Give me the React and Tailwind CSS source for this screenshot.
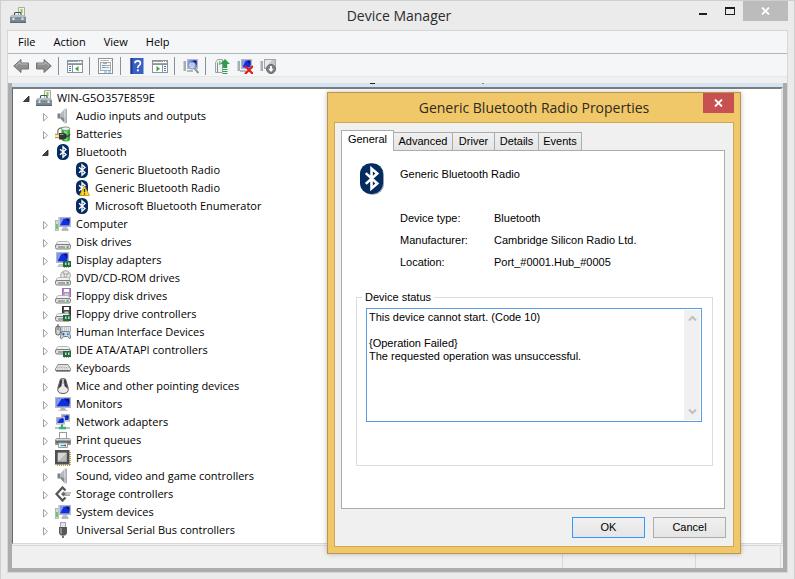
import React from "react";

const UI = "font-['Open_Sans','Noto_Sans',sans-serif]";
const DIALOG = "font-['Liberation_Sans',Arial,sans-serif]";

function Svg({ children, size = "size-4", box = "0 0 16 16" }) {
  return (
    <svg viewBox={box} className={`${size} shrink-0`} aria-hidden="true">
      {children}
    </svg>
  );
}

/* ---------- shared drawing parts ---------- */

function ScreenPart({ x = 4, y = 1, w = 12, h = 10 }) {
  return (
    <g>
      <rect x={x} y={y} width={w} height={h} fill="#d6d9dd" />
      <rect x={x + 0.5} y={y + 0.5} width={w - 1} height={h - 1} fill="none" stroke="#b4b9c0" />
      <rect x={x + 1.5} y={y + 1.5} width={w - 3} height={h - 3} fill="#1230d8" />
      <path d={`M${x + 1.5} ${y + h - 1.5}V${y + 1.5}h${(w - 3) * 0.4}z`} fill="#7f9cf5" />
      <path d={`M${x + w * 0.55} ${y + 1.5}h${w * 0.45 - 1.5}v${h * 0.5}z`} fill="#0512a0" />
    </g>
  );
}

function ChipPart() {
  return (
    <g>
      <rect x="8" y="9" width="8" height="6" fill="#1f6b45" />
      <rect x="10" y="10.500" width="1.500" height="2.500" fill="#b5dcc4" />
      <rect x="13" y="10.500" width="1.500" height="2.500" fill="#b5dcc4" />
      <path d="M9 15.500h6" stroke="#c9a54a" strokeDasharray="1 1" />
    </g>
  );
}

function DrivePart() {
  return (
    <g>
      <path d="M3.500 7.500h9q1 0 1.500 1l1.500 3H.5l1.500-3q.5-1 1.500-1z" fill="#f1f1f1" stroke="#a8a8a8" strokeWidth=".8" />
      <rect x=".5" y="10.500" width="15" height="4.500" rx="1.500" fill="#e2e2e2" stroke="#7d7d7d" />
      <path d="M3 13h7" stroke="#6a6a6a" />
      <rect x="11.600" y="11.700" width="2" height="2.300" fill="#42b649" />
    </g>
  );
}

function BluetoothPart() {
  return (
    <g>
      <rect x="2" y="0" width="12" height="16" rx="5.5" fill="#052c61" />
      <path d="M5 5.2l6 5.4-3 2.6V2.8l3 2.6-6 5.4" fill="none" stroke="#fff" strokeWidth="1.35" />
    </g>
  );
}

function PanePart({ children }) {
  return (
    <g>
      <rect x=".5" y="2.5" width="15" height="12" fill="#fff" stroke="#8a929a" />
      <path d="M1 3.5h14M1 5.5h14" stroke="#9aa4ae" />
      <path d="M11 3.5h1M13 3.5h1" stroke="#fff" />
      <path d="M0 6.5h16" stroke="#8a929a" />
      {children}
    </g>
  );
}

/* ---------- icons ---------- */

const icons = {
  manager: (
    <Svg>
      <path d="M8.500 .5h6V9h-6z" fill="#f1f2ec" stroke="#a9aaa2" />
      <path d="M10.500 2h2v4h-2z" fill="#86c94c" />
      <path d="M4.500 8V6.500q0-1 1-1H10q1 0 1 1V8" fill="none" stroke="#4c5358" strokeWidth="1.200" />
      <path d="M1.500 8h13L16 10.500V16H0v-5.500z" fill="#8796a0" />
      <path d="M1.800 8h12.400l1.300 2.500H.5z" fill="#b3bfc7" />
      <path d="M0 11h16" stroke="#6b7a84" />
      <path d="M0 14.500h16" stroke="#74838d" strokeWidth="2.500" />
      <path d="M2.500 10.500h2V13h-2zM11.500 10.500h2V13h-2z" fill="#dfe6ea" />
      <path d="M0 15.600h16" stroke="#505d66" strokeWidth=".8" />
    </Svg>
  ),
  speaker: (
    <Svg>
      <path d="M2.500 5.500h3v5h-3z" fill="#7b8086" />
      <path d="M5.500 5.500L9.500 1v14l-4-4.500z" fill="#b4b8bd" />
      <path d="M5.500 9L9.500 10v5l-4-4.500z" fill="#858a90" />
      <path d="M9.500 .5h2v15h-2z" fill="#c9ccd0" />
      <path d="M11.300 1v14" stroke="#8a8f94" strokeWidth=".8" />
    </Svg>
  ),
  battery: (
    <Svg>
      <path d="M6.500 3Q6.500 1 10.500 1T15 3v10q0 2.500-4.250 2.500T6.500 13z" fill="#2fa83a" />
      <path d="M9 4.500h3.500v10H10q-1 0-1-1z" fill="#6fe07a" />
      <ellipse cx="10.750" cy="2.700" rx="4.200" ry="1.800" fill="#eef2ec" stroke="#74806f" strokeWidth=".8" />
      <path d="M3 8Q1.500 2 7 1.800" fill="none" stroke="#5a5a5a" strokeWidth="1.100" />
      <path d="M4 7h4q4 .3 4 3.200T8 13.500H4z" fill="#373737" />
      <path d="M5 8.500h3.500" stroke="#9c9c9c" />
      <path d="M0 8.500h4M0 11.500h4" stroke="#c3a12c" strokeWidth="1.300" />
      <path d="M12 10.200q2 .3 3-2" fill="none" stroke="#444" strokeWidth="1.400" />
    </Svg>
  ),
  bluetooth: (
    <Svg>
      <BluetoothPart />
    </Svg>
  ),
  bluetoothWarning: (
    <Svg>
      <BluetoothPart />
      <path d="M10.500 6l5 9.500h-10z" fill="#fdd835" stroke="#c39a12" strokeWidth=".8" strokeLinejoin="round" />
      <path d="M10.500 9v3.200M10.500 13.300v1.200" stroke="#3a2c00" strokeWidth="1.300" />
    </Svg>
  ),
  computer: (
    <Svg>
      <rect x=".5" y="4.500" width="3" height="10" fill="#d5d8db" stroke="#a5aab0" strokeWidth=".8" />
      <rect x="1.200" y="8" width="1.600" height="5" fill="#4fc24a" />
      <ScreenPart x={3.500} y={1} w={12.500} h={10} />
      <path d="M8 11h4l1.500 3.500h-7z" fill="#bcc0c5" />
      <path d="M6.500 14h7" stroke="#9a9fa6" />
    </Svg>
  ),
  disk: (
    <Svg>
      <DrivePart />
    </Svg>
  ),
  display: (
    <Svg>
      <ScreenPart x={1} y={0} w={13} h={11} />
      <path d="M4 12h5v3H2z" fill="#c3c7cc" />
      <ChipPart />
    </Svg>
  ),
  dvd: (
    <Svg>
      <circle cx="10.500" cy="5.500" r="4.800" fill="#e9e9e9" stroke="#949494" strokeWidth=".9" />
      <path d="M10.500 5.500L7.500 2M10.500 5.500l3.500-3" stroke="#a9a9a9" strokeWidth="1.200" />
      <circle cx="10.500" cy="5.500" r="1.400" fill="#fff" stroke="#888" strokeWidth=".8" />
      <DrivePart />
    </Svg>
  ),
  floppy: (
    <Svg>
      <rect x="7.500" y=".5" width="8" height="8" fill="#b58bc9" stroke="#9a72b0" />
      <rect x="9" y="1" width="5" height="3" fill="#fff" />
      <rect x="9.500" y="5.500" width="4" height="3" fill="#e3d2ea" />
      <DrivePart />
    </Svg>
  ),
  floppyController: (
    <Svg>
      <rect x="7.500" y=".5" width="8" height="8" fill="#4c4c4c" stroke="#333" />
      <rect x="9" y="1" width="5" height="3" fill="#fff" />
      <rect x="9.500" y="5.500" width="4" height="3" fill="#ccc" />
      <DrivePart />
      <ChipPart />
    </Svg>
  ),
  hid: (
    <Svg>
      <rect x=".8" y="2" width="4.500" height="9" rx="2" fill="#d9d9d9" stroke="#555" />
      <path d="M3 0v6" stroke="#555" />
      <rect x="6" y="2.500" width="9.500" height="5" fill="#e8ebee" stroke="#8f979f" strokeWidth=".8" />
      <path d="M7 4h8M7 6h8" stroke="#9aa2aa" strokeDasharray="1 1" />
      <path d="M6.500 8q4-1.200 8 0l1.300 6q-1.300 2-3-1.500H8.500q-1.700 3.500-3.300 1.500z" fill="#cfdbe6" stroke="#5f7386" strokeWidth=".9" />
      <path d="M7.200 10.200h2.500M8.400 9v2.500" stroke="#31485e" strokeWidth=".9" />
      <circle cx="12.800" cy="10.200" r="1" fill="#2e86d8" />
    </Svg>
  ),
  ide: (
    <Svg>
      <path d="M3.500 4.500h9q1 0 1.500 1l1.500 3H.5l1.500-3q.5-1 1.500-1z" fill="#f1f1f1" stroke="#a8a8a8" strokeWidth=".8" />
      <rect x=".5" y="7.500" width="15" height="4.500" rx="1.500" fill="#e2e2e2" stroke="#7d7d7d" />
      <path d="M3 10h5" stroke="#6a6a6a" />
      <ChipPart />
    </Svg>
  ),
  keyboard: (
    <Svg>
      <path d="M3 4.500h10l2.500 4.500v1q0 1-1 1h-13q-1 0-1-1V9z" fill="#f4f4f4" stroke="#7c7c7c" strokeWidth=".9" />
      <path d="M3.500 6h9M2.500 7.500h11M2 9h12" stroke="#a0a0a0" strokeDasharray="1 .7" />
      <path d="M1 10.800h14" stroke="#555" strokeWidth="1.200" />
    </Svg>
  ),
  mouse: (
    <Svg>
      <path d="M5.500 1Q8 .2 10.500 1l2.800 9.500q.5 5-5.300 5t-5.300-5z" fill="#e9e9e9" stroke="#5c5c5c" />
      <path d="M5.500 1.500h1.700L6.500 8l-3.500 3zM8.800 1.500h1.700L13 11 9.500 8z" fill="#3c3c3c" />
      <path d="M8 1v5" stroke="#999" />
    </Svg>
  ),
  monitor: (
    <Svg>
      <ScreenPart x={0} y={1} w={16} h={11} />
      <path d="M6 12h4l1.500 3h-7z" fill="#b2b7bd" />
      <path d="M3.500 14.500h9" stroke="#c0c4c8" />
    </Svg>
  ),
  network: (
    <Svg>
      <ScreenPart x={6} y={0} w={9} h={7.500} />
      <ScreenPart x={1} y={3} w={9} h={7.500} />
      <path d="M7 10.500v3" stroke="#3f9d73" strokeWidth="2" />
      <path d="M0 14h15" stroke="#b7c3bd" strokeWidth="2" />
      <path d="M4 14h7" stroke="#33b47a" strokeWidth="2.600" />
    </Svg>
  ),
  printer: (
    <Svg>
      <rect x="4.500" y=".5" width="7" height="6" fill="#fff" stroke="#9b9b9b" />
      <path d="M1.500 6h13L16 8v4q0 1-1 1H1q-1 0-1-1V8z" fill="#8b8f93" />
      <path d="M1 7.500h14" stroke="#d4d7da" strokeWidth="1.500" />
      <path d="M1 10h14" stroke="#5d6165" strokeWidth="1.600" />
      <path d="M3.500 11h9v4.500h-9z" fill="#f7f7f7" stroke="#999" />
      <path d="M5.500 13.500h4" stroke="#2aa8d8" strokeWidth="1.500" />
      <path d="M9.500 13.500h1.500" stroke="#333" strokeWidth="1.500" />
    </Svg>
  ),
  processor: (
    <Svg>
      <path d="M2 15.200h13M15.200 2v13" stroke="#c49b32" strokeWidth="1.500" strokeDasharray="1 1" />
      <rect x="0" y="0" width="14.500" height="14.500" fill="#505050" />
      <rect x="2.800" y="2.800" width="9" height="9" fill="#b9b9b9" />
      <path d="M2.800 11.800v-9h9z" fill="#d6d6d6" />
    </Svg>
  ),
  storage: (
    <Svg>
      <path d="M10.500 4.500L7.500 1.500 1.500 8l6 6.500 3-3" fill="none" stroke="#565656" strokeWidth="2.300" />
      <path d="M6 8l2.500-2.500L11 8l-2.500 2.500z" fill="#6d6d6d" />
      <path d="M10 7h6M10 9.200h5" stroke="#858585" strokeWidth="1.200" />
    </Svg>
  ),
  usb: (
    <Svg>
      <rect x="5.500" y=".5" width="5" height="5" fill="#e2e4e8" stroke="#a2a6ac" />
      <path d="M4 5h8v5.500q0 2-2 3H6q-2-1-2-3z" fill="#55585c" />
      <path d="M5 6h2v6.500Q5 11.500 5 10.500z" fill="#8b8f94" />
      <path d="M8 13.500V16" stroke="#777" strokeWidth="2" />
    </Svg>
  ),
};

const tools = {
  back: (
    <Svg>
      <path d="M.7 8L8 1.500V5h7.500v6H8v3.500z" fill="#8f8f8f" stroke="#737373" strokeLinejoin="round" />
      <path d="M3 7.500L7 4v2h7.500" fill="none" stroke="#bcbcbc" />
    </Svg>
  ),
  forward: (
    <Svg>
      <path d="M15.300 8L8 1.500V5H.5v6H8v3.500z" fill="#8f8f8f" stroke="#737373" strokeLinejoin="round" />
      <path d="M1.500 6H9V4l4 3.500" fill="none" stroke="#bcbcbc" />
    </Svg>
  ),
  tree: (
    <Svg>
      <PanePart>
        <path d="M5.500 7v8" stroke="#8a929a" />
        <path d="M2 8.500h2M2 10.500h2M2 12.500h2" stroke="#3d7fb5" />
        <path d="M11.500 8v5.500L8 10.700z" fill="#3ba53b" />
      </PanePart>
    </Svg>
  ),
  properties: (
    <Svg>
      <rect x=".5" y=".5" width="14" height="15" fill="#fff" stroke="#8a929a" />
      <path d="M2 2.500h9M13 2.500h1" stroke="#b0b6bc" />
      <rect x="2.500" y="4.500" width="10" height="8" fill="#f2f4f6" stroke="#a3a9af" />
      <path d="M4 7.500h3M4 9.500h3" stroke="#5b9bc8" />
      <path d="M7 7.500h5M7 9.500h4M5 5.500h4" stroke="#a8aeb4" />
      <path d="M6 14h3M10 14h3" stroke="#2ec0e8" />
    </Svg>
  ),
  help: (
    <Svg>
      <rect x="1.500" y="0" width="13" height="16" fill="#3a5fc4" />
      <rect x="1.500" y="0" width="2" height="16" fill="#1d3c8c" />
      <path d="M6 5.200Q6 2.800 8.700 2.800T11.400 5.200Q11.400 6.600 9.800 7.600 8.800 8.300 8.800 10" fill="none" stroke="#fff" strokeWidth="1.700" />
      <rect x="7.900" y="11.400" width="1.900" height="1.900" fill="#fff" />
    </Svg>
  ),
  action: (
    <Svg>
      <PanePart>
        <path d="M10.500 7v8" stroke="#8a929a" />
        <path d="M12 8.500h2M12 10.500h2M12 12.500h2" stroke="#3d7fb5" />
        <path d="M4.500 8v5.500L8 10.700z" fill="#3ba53b" />
      </PanePart>
    </Svg>
  ),
  scan: (
    <Svg>
      <rect x=".5" y="3" width="2.500" height="10" fill="#a7adb3" />
      <ScreenPart x={4} y={1} w={11} h={10} />
      <path d="M4 13h6" stroke="#b4b9bf" strokeWidth="2" />
      <circle cx="9" cy="7.500" r="3.600" fill="#cfe4f7" fillOpacity=".85" stroke="#8b98a6" />
      <path d="M11.500 10.500l4 4.500" stroke="#8d97a2" strokeWidth="2" />
    </Svg>
  ),
  update: (
    <Svg>
      <path d="M1.500 4.500l2-3h5v13h-7z" fill="#eef0f1" stroke="#a0a4a8" />
      <path d="M3.500 4.500v10" stroke="#84898e" />
      <rect x="5" y="3" width="1.500" height="4" fill="#6fc46f" />
      <path d="M11 1l5 5h-2.800v4H8.800V6H6z" fill="#2f9c52" />
      <path d="M8.500 11.500h5M8.500 13.500h5M8.500 15.500h5" stroke="#2f9c52" />
    </Svg>
  ),
  uninstall: (
    <Svg>
      <rect x=".5" y="3" width="2.500" height="10" fill="#a7adb3" />
      <ScreenPart x={4} y={1} w={11} h={10} />
      <path d="M3 13h6" stroke="#b4b9bf" strokeWidth="2" />
      <path d="M8 8l8 8M16 8l-8 8" stroke="#e01b1b" strokeWidth="2.200" />
    </Svg>
  ),
  disable: (
    <Svg>
      <rect x=".5" y="3" width="2.500" height="10" fill="#a7adb3" />
      <rect x="4.500" y="1.500" width="11" height="9" fill="#c3c6c9" stroke="#a0a5aa" />
      <path d="M5 10V2h7z" fill="#e8eaec" />
      <circle cx="11" cy="11" r="4.500" fill="#7d8185" stroke="#66696d" />
      <path d="M11 8v3.500" stroke="#fff" strokeWidth="1.800" />
      <path d="M8.300 10.800h5.400L11 14z" fill="#fff" />
    </Svg>
  ),
};

const devices = [
  { name: "Audio inputs and outputs", icon: "speaker" },
  { name: "Batteries", icon: "battery" },
  {
    name: "Bluetooth",
    icon: "bluetooth",
    children: [
      { name: "Generic Bluetooth Radio", icon: "bluetooth" },
      { name: "Generic Bluetooth Radio", icon: "bluetoothWarning" },
      { name: "Microsoft Bluetooth Enumerator", icon: "bluetooth" },
    ],
  },
  { name: "Computer", icon: "computer" },
  { name: "Disk drives", icon: "disk" },
  { name: "Display adapters", icon: "display" },
  { name: "DVD/CD-ROM drives", icon: "dvd" },
  { name: "Floppy disk drives", icon: "floppy" },
  { name: "Floppy drive controllers", icon: "floppyController" },
  { name: "Human Interface Devices", icon: "hid" },
  { name: "IDE ATA/ATAPI controllers", icon: "ide" },
  { name: "Keyboards", icon: "keyboard" },
  { name: "Mice and other pointing devices", icon: "mouse" },
  { name: "Monitors", icon: "monitor" },
  { name: "Network adapters", icon: "network" },
  { name: "Print queues", icon: "printer" },
  { name: "Processors", icon: "processor" },
  { name: "Sound, video and game controllers", icon: "speaker" },
  { name: "Storage controllers", icon: "storage" },
  { name: "System devices", icon: "computer" },
  { name: "Universal Serial Bus controllers", icon: "usb" },
];

function Arrow({ open }) {
  return (
    <Svg>
      {open ? (
        <path d="M9 6v5.500H3.500z" fill="#444" stroke="#222" strokeWidth=".8" />
      ) : (
        <path d="M4.500 5.500v7.500l4-3.750z" fill="#fff" stroke="#a0a0a0" />
      )}
    </Svg>
  );
}

function TreeNode({ node, leaf = false }) {
  return (
    <li role="treeitem" aria-expanded={leaf ? undefined : !!node.children}>
      <div className="flex h-[18px] items-center">
        {leaf ? <span className="size-4 shrink-0" /> : <Arrow open={!!node.children} />}
        {icons[node.icon]}
        <span className="pl-[5px] whitespace-nowrap">{node.name}</span>
      </div>
      {node.children && (
        <ul role="group" className="pl-[19px]">
          {node.children.map((child, i) => (
            <TreeNode key={i} node={child} leaf />
          ))}
        </ul>
      )}
    </li>
  );
}

function CloseGlyph() {
  return (
    <Svg size="w-[9px] h-[8px]" box="0 0 9 8">
      <path d="M1 .5l7 7M8 .5l-7 7" stroke="#fff" strokeWidth="1.800" />
    </Svg>
  );
}

function TitleBar() {
  return (
    <header className="grid h-[29px] grid-cols-[1fr_auto_1fr] pr-1.5 pl-[9px]">
      <span className="pt-1.5">{icons.manager}</span>
      <h1 className="text-[14px] leading-[29px] text-[#2b2b2b]">Device Manager</h1>
      <div className="flex h-5 justify-end">
        <button aria-label="Minimize" className="flex w-[26px] items-end justify-center pb-1.5">
          <span className="h-0.5 w-2 bg-[#1e1e1e]" />
        </button>
        <button aria-label="Maximize" className="flex w-[27px] items-center justify-center">
          <span className="h-2 w-2.5 border border-t-2 border-[#1e1e1e]" />
        </button>
        <button aria-label="Close" className="flex w-[45px] items-center justify-center bg-[#bcbcbc]">
          <CloseGlyph />
        </button>
      </div>
    </header>
  );
}

function Tool({ name, label }) {
  return (
    <button aria-label={label} className="flex h-full w-[23px] items-center pl-[3px]">
      {tools[name]}
    </button>
  );
}

function Separator() {
  return <span className="mr-[5px] ml-0.5 h-[18px] w-px bg-[#8c8f93]" />;
}

function Toolbar() {
  return (
    <div role="toolbar" className="flex h-[23px] items-center border-b border-[#e6e7e8] pt-px pl-0.5">
      <Tool name="back" label="Back" />
      <Tool name="forward" label="Forward" />
      <Separator />
      <Tool name="tree" label="Show console tree" />
      <Separator />
      <Tool name="properties" label="Properties" />
      <Separator />
      <Tool name="help" label="Help" />
      <Tool name="action" label="Show action pane" />
      <Separator />
      <Tool name="scan" label="Scan for hardware changes" />
      <Separator />
      <Tool name="update" label="Update driver" />
      <Tool name="uninstall" label="Uninstall" />
      <Tool name="disable" label="Disable" />
    </div>
  );
}

function ScrollButton({ label, d }) {
  return (
    <button aria-label={label} className="flex h-[17px] items-center justify-center">
      <Svg size="w-[9px] h-[7px]" box="0 0 9 7">
        <path d={d} fill="none" stroke="#bfbfbf" strokeWidth="2" />
      </Svg>
    </button>
  );
}

function Tab({ width, children }) {
  return (
    <button
      role="tab"
      aria-selected="false"
      className={`${width} h-[18px] border border-b-0 border-l-0 border-[#acacac] bg-linear-to-b from-[#f0f0f0] to-[#e5e5e5]`}
    >
      {children}
    </button>
  );
}

const details = [
  ["Device type:", "Bluetooth"],
  ["Manufacturer:", "Cambridge Silicon Radio Ltd."],
  ["Location:", "Port_#0001.Hub_#0005"],
];

const status = `This device cannot start. (Code 10)

{Operation Failed}
The requested operation was unsuccessful.`;

function PropertiesDialog() {
  return (
    <section
      role="dialog"
      aria-labelledby="dialog-title"
      className="absolute top-[91px] left-[326px] flex h-[462px] w-[414px] flex-col border border-[#b9974e] bg-[#f0c869] px-1.5 pb-1.5 shadow-[0_0_5px_rgba(0,0,0,0.25)]"
    >
      <div className="grid h-[29px] shrink-0 grid-cols-[31px_1fr_31px]">
        <h2
          id="dialog-title"
          className="col-start-2 text-center text-[14px] leading-[29px] whitespace-nowrap text-[#2f2a1f]"
        >
          Generic Bluetooth Radio Properties
        </h2>
        <button aria-label="Close" className="flex h-5 items-center justify-center bg-[#c75050]">
          <CloseGlyph />
        </button>
      </div>

      <div
        className={`${DIALOG} flex flex-1 flex-col border border-[#cda855] bg-[#f0f0f0] px-1.5 pt-[7px] text-[11px] leading-[13px] text-black`}
      >
        <div role="tablist" className="flex items-end">
          <button
            role="tab"
            aria-selected="true"
            className="relative -mb-px h-[21px] w-[53px] border border-b-0 border-[#acacac] bg-white pb-1"
          >
            General
          </button>
          <Tab width="w-[59px]">Advanced</Tab>
          <Tab width="w-[42px]">Driver</Tab>
          <Tab width="w-[44px]">Details</Tab>
          <Tab width="w-[43px]">Events</Tab>
        </div>

        <div role="tabpanel" className="mr-[2px] h-[359px] border border-[#acacac] bg-white pt-3 pr-[11px] pl-[14px]">
          <div className="flex gap-4 pl-1">
            <Svg size="w-[24px] h-[32px]" box="2 0 12.500 16.500">
              <rect x="2.500" y=".4" width="12" height="16" rx="5.500" fill="#9aa5b5" />
              <BluetoothPart />
            </Svg>
            <p className="pt-[5px]">Generic Bluetooth Radio</p>
          </div>
          <dl className="mt-[17px] grid grid-cols-[94px_1fr] gap-y-[9px] pl-11">
            {details.map(([term, value]) => (
              <React.Fragment key={term}>
                <dt>{term}</dt>
                <dd>{value}</dd>
              </React.Fragment>
            ))}
          </dl>
          <fieldset className="mt-[22px] h-[175px] border border-[#dcdcdc] pr-[10px] pl-[9px]">
            <legend className="-ml-1 px-[3px]">
              <label htmlFor="device-status">Device status</label>
            </legend>
            <div className="mt-1 flex h-[114px] border border-[#569de5] p-px">
              <textarea
                id="device-status"
                readOnly
                defaultValue={status}
                className="flex-1 resize-none overflow-hidden pt-px pl-px outline-none"
              />
              <div className="flex w-4 flex-col justify-between bg-[#f0f0f0]">
                <ScrollButton label="Scroll up" d="M1 5.500l3.500-3.500 3.500 3.500" />
                <ScrollButton label="Scroll down" d="M1 1.500l3.500 3.500 3.500-3.500" />
              </div>
            </div>
          </fieldset>
        </div>

        <div className="mt-2 mr-px flex justify-end gap-2">
          <button className="h-[21px] w-[73px] border border-[#3399ff] bg-linear-to-b from-[#f0f0f0] to-[#e5e5e5]">
            OK
          </button>
          <button className="h-[21px] w-[73px] border border-[#acacac] bg-linear-to-b from-[#f0f0f0] to-[#e5e5e5]">
            Cancel
          </button>
        </div>
      </div>
    </section>
  );
}

export default function App() {
  return (
    <div
      className={`${UI} relative flex min-h-screen flex-col border border-[#cfcfcf] bg-[#ebebeb] text-[11px] leading-[18px] text-black`}
    >
      <TitleBar />
      <main className="mx-1.5 mb-1.5 flex flex-1 flex-col border border-[#d6d6d6] bg-[#f5f6f8]">
        <nav className="flex h-[23px] items-center gap-[18px] border-b border-[#b2b5b8] pl-[10px]">
          <button>File</button>
          <button>Action</button>
          <button>View</button>
          <button>Help</button>
        </nav>
        <Toolbar />
        <div className="h-1.5 bg-[#f0f0f0]" />
        <div className="flex flex-1 flex-col border-x-4 border-b-4 border-[#acacac] bg-[#f0f0f0]">
          <div className="flex h-1 bg-[#d6e3f1]">
            <span className="ml-[358px] h-px w-[5px] bg-[#222]" />
            <span className="ml-[107px] h-px w-0.5 bg-[#888]" />
          </div>
          <div className="flex-1 border-t-2 border-r-2 border-b border-l border-t-[#7a7d82] border-r-[#e3e3e3] border-b-[#d8d8d8] border-l-[#696969] bg-white pb-1 pl-[7px]">
            <ul role="tree">
              <li role="treeitem" aria-expanded="true">
                <div className="flex h-[18px] items-center">
                  <Arrow open />
                  {icons.manager}
                  <span className="pl-[5px]">WIN-G5O357E859E</span>
                </div>
                <ul role="group" className="pl-[19px]">
                  {devices.map((d) => (
                    <TreeNode key={d.name} node={d} />
                  ))}
                </ul>
              </li>
            </ul>
          </div>
          <footer className="mt-px flex h-[23px] justify-end border-t border-[#d8d8d8] pr-0.5">
            <span className="w-[133px] border-l border-[#d8d8d8]" />
            <span className="w-[86px] border-x border-[#d8d8d8]" />
          </footer>
        </div>
      </main>
      <PropertiesDialog />
    </div>
  );
}
